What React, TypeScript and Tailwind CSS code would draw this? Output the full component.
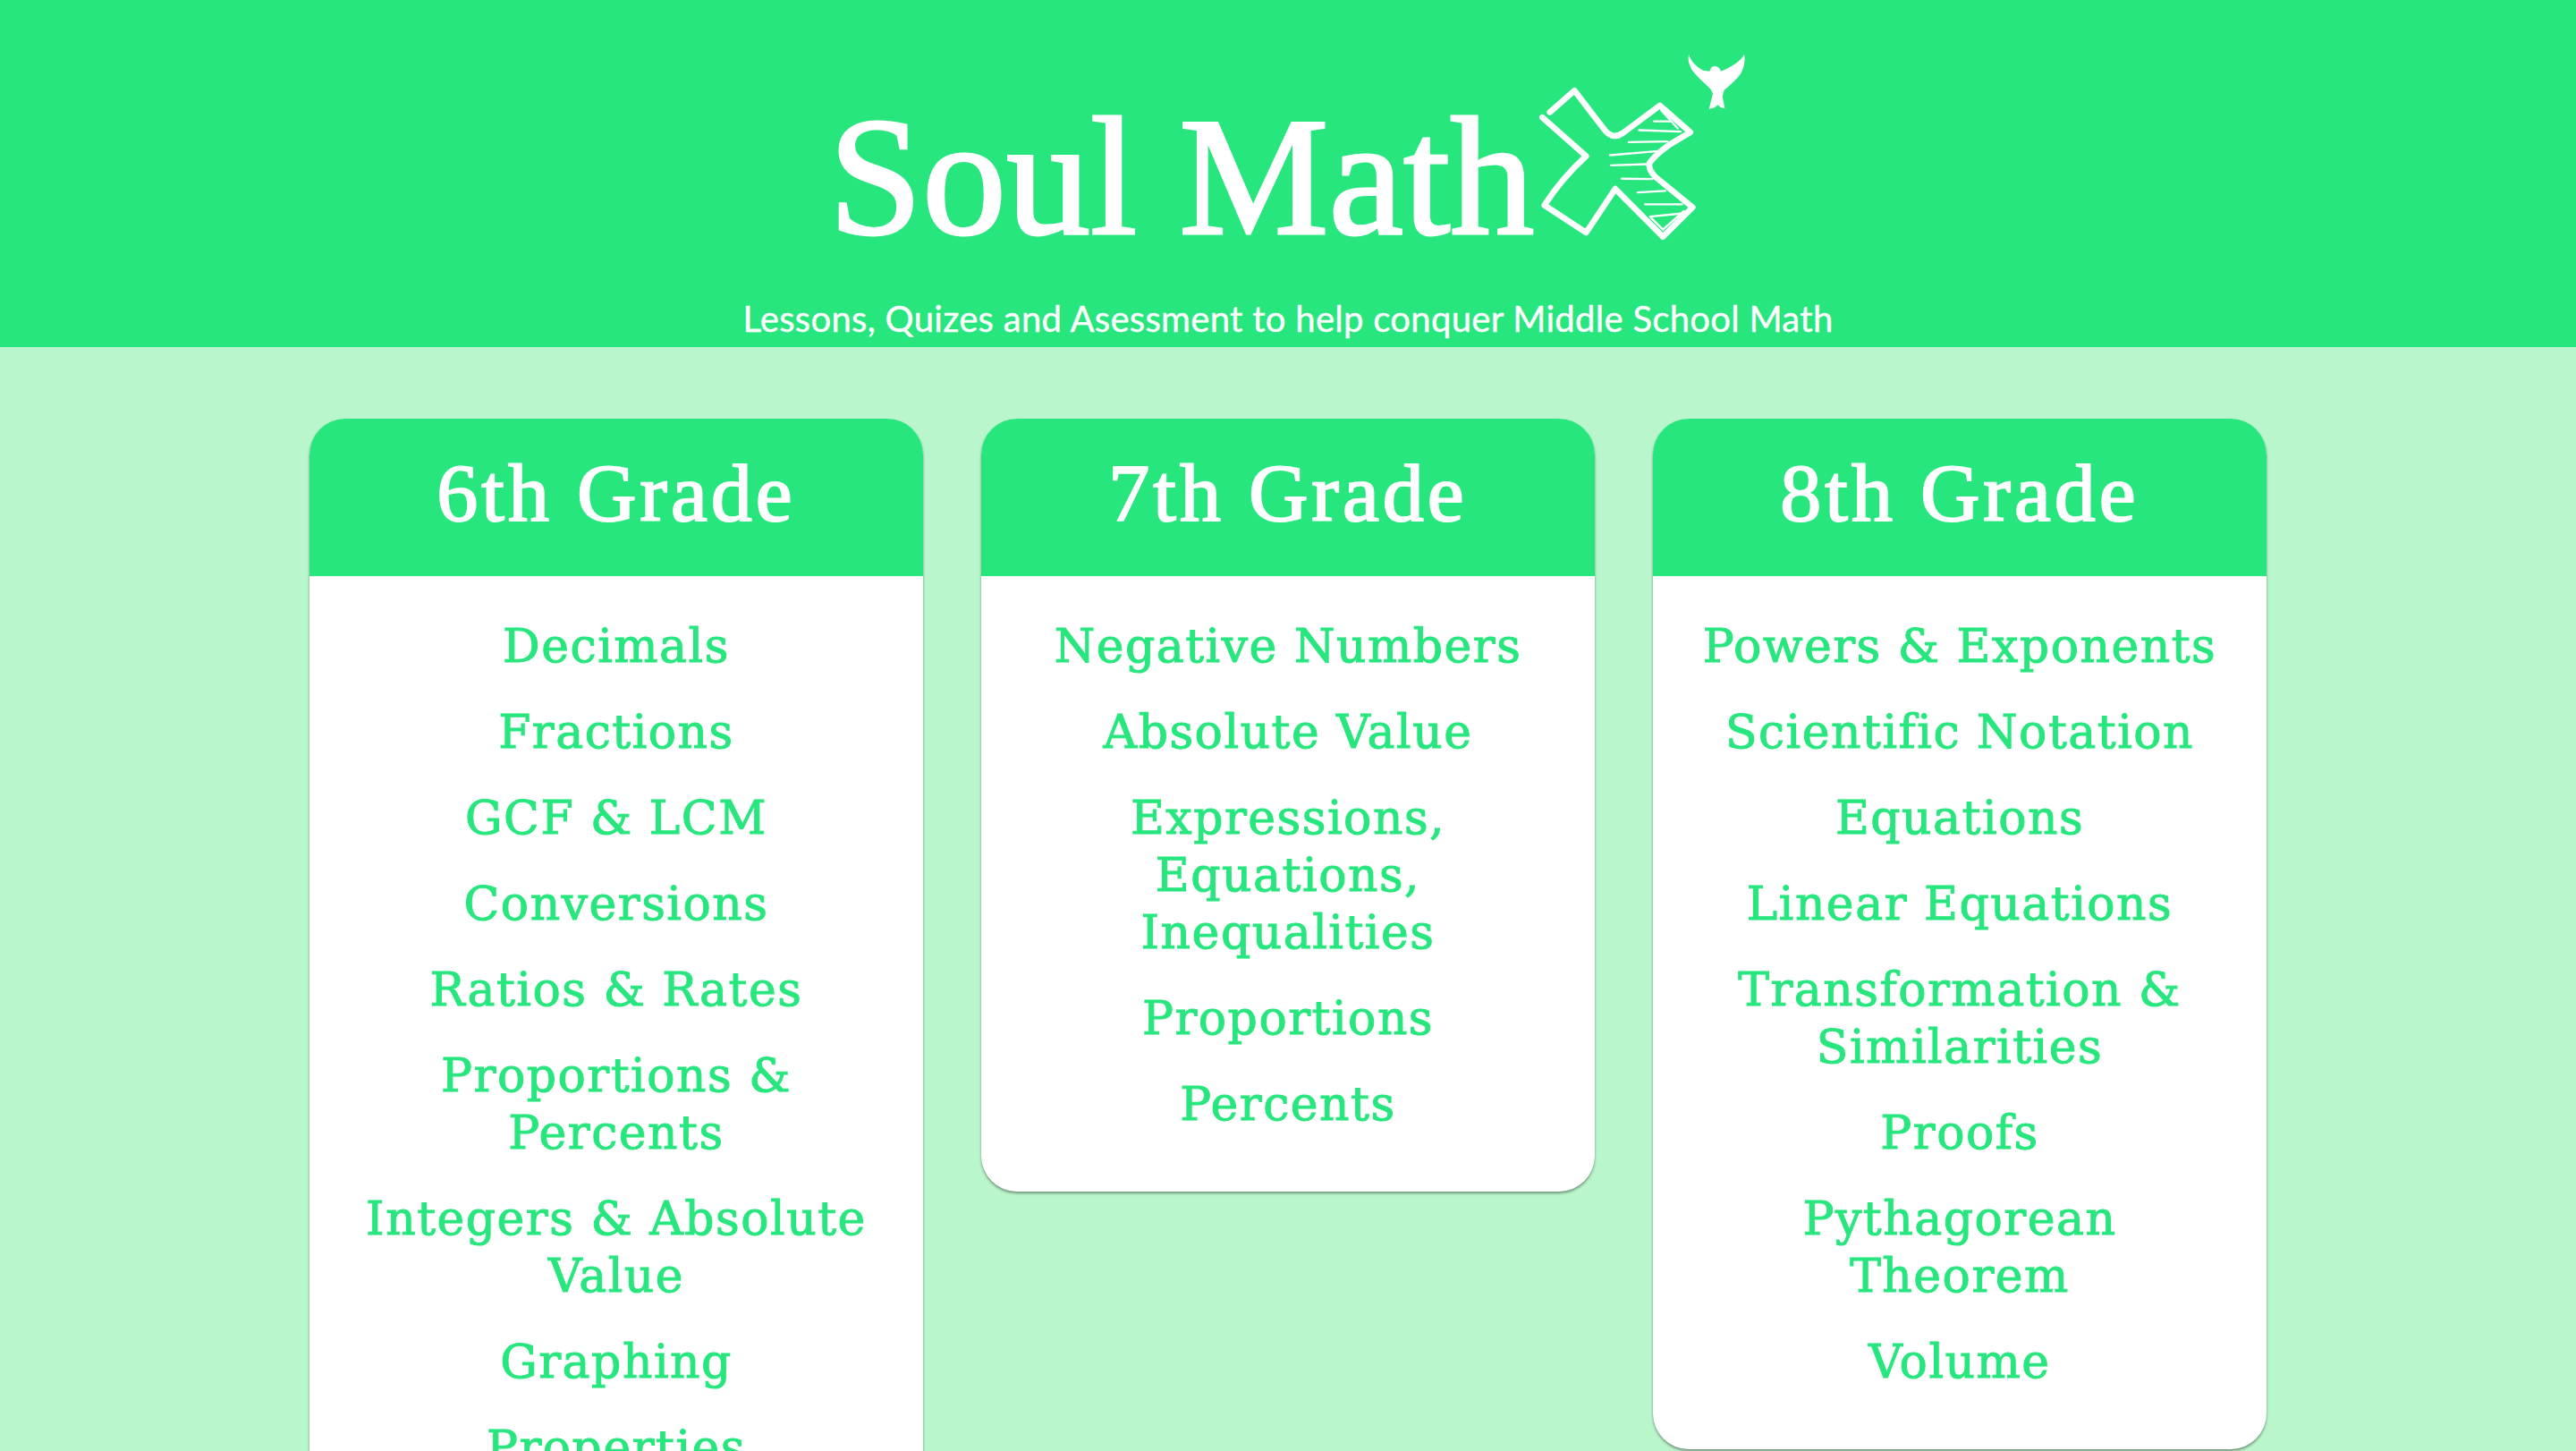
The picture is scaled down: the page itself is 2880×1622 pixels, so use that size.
const grades = [
  {
    title: '6th Grade',
    topics: [
      'Decimals',
      'Fractions',
      'GCF & LCM',
      'Conversions',
      'Ratios & Rates',
      'Proportions &\nPercents',
      'Integers & Absolute\nValue',
      'Graphing',
      'Properties',
    ],
  },
  {
    title: '7th Grade',
    topics: [
      'Negative Numbers',
      'Absolute Value',
      'Expressions,\nEquations,\nInequalities',
      'Proportions',
      'Percents',
    ],
  },
  {
    title: '8th Grade',
    topics: [
      'Powers & Exponents',
      'Scientific Notation',
      'Equations',
      'Linear Equations',
      'Transformation &\nSimilarities',
      'Proofs',
      'Pythagorean\nTheorem',
      'Volume',
    ],
  },
];

function LogoMark() {
  return (
    <svg viewBox="125 55 700 640" className="w-[233px] h-[213px] shrink-0" fill="none">
      <g stroke="#ffffff" strokeWidth="20" strokeLinecap="round" strokeLinejoin="round">
        <path d="M160 258 L243 185 L345 318 Q372 350 405 328 L530 235 L632 325 L560 368 Q515 400 495 428 Q490 450 515 475 L640 577 L540 676 L380 515 L282 662 L142 570 Q200 480 282 405 L135 275" />
      </g>
      <g stroke="#ffffff" strokeWidth="7" strokeLinecap="round">
        <path d="M535 252 L590 312" />
        <path d="M510 288 L565 288" />
        <path d="M460 318 L600 323" />
        <path d="M425 358 L555 356" />
        <path d="M362 402 L525 388" />
        <path d="M365 436 L485 432" />
        <path d="M402 481 L505 482" />
        <path d="M455 527 L548 522" />
        <path d="M480 567 L605 567" />
        <path d="M497 608 L600 598" />
        <path d="M500 612 L540 652 L610 590" />
      </g>
      <path
        fill="#ffffff"
        d="M627 63 C632 82 648 102 675 117 L697 120 C700 108 706 103 714 103 C724 103 732 110 735 120 C762 108 798 92 813 63 C818 85 812 110 800 130 C785 152 758 172 745 185 L740 205 L748 245 L735 242 L725 233 L713 242 L695 247 L708 195 L700 180 C685 165 662 145 645 125 C630 105 622 85 627 63 Z"
      />
    </svg>
  );
}

function GradeCard({ title, topics }: { title: string; topics: string[] }) {
  return (
    <div className="w-[686px] rounded-[40px] bg-white overflow-hidden shadow-[0_2px_3px_rgba(0,0,0,0.4)]">
      <div className="h-[176px] pb-[10px] bg-[#28e67e] flex items-center justify-center">
        <h2 className="text-white text-[92px] leading-none tracking-[4px] font-['Liberation_Serif',serif] [-webkit-text-stroke:2px_white]">
          {title}
        </h2>
      </div>
      <ul className="pt-[46px] pb-[66px] flex flex-col gap-8 text-center">
        {topics.map((topic) => (
          <li
            key={topic}
            className="whitespace-pre-line text-[#28e67e] text-[52px] leading-[64px] tracking-[1.5px] font-['DejaVu_Serif',serif] [-webkit-text-stroke:1px_#28e67e]"
          >
            {topic}
          </li>
        ))}
      </ul>
    </div>
  );
}

export default function App() {
  return (
    <div className="h-screen overflow-hidden bg-[#baf6cb]">
      <header className="h-[388px] bg-[#28e67e] pt-[58px] flex flex-col items-center">
        <div className="h-[274px] flex items-start">
          <h1 className="mt-[40px] w-[794px] text-white text-[188px] leading-[200px] whitespace-nowrap font-['Liberation_Serif',serif] [-webkit-text-stroke:3px_white]">
            Soul Math
          </h1>
          <LogoMark />
        </div>
        <p className="text-white text-[40px] leading-[48px] tracking-[0.3px] font-['Lato',sans-serif] [-webkit-text-stroke:0.4px_white]">
          Lessons, Quizes and Asessment to help conquer Middle School Math
        </p>
      </header>
      <main className="pt-[80px] flex justify-center items-start gap-[65px]">
        {grades.map((grade) => (
          <GradeCard key={grade.title} title={grade.title} topics={grade.topics} />
        ))}
      </main>
    </div>
  );
}
